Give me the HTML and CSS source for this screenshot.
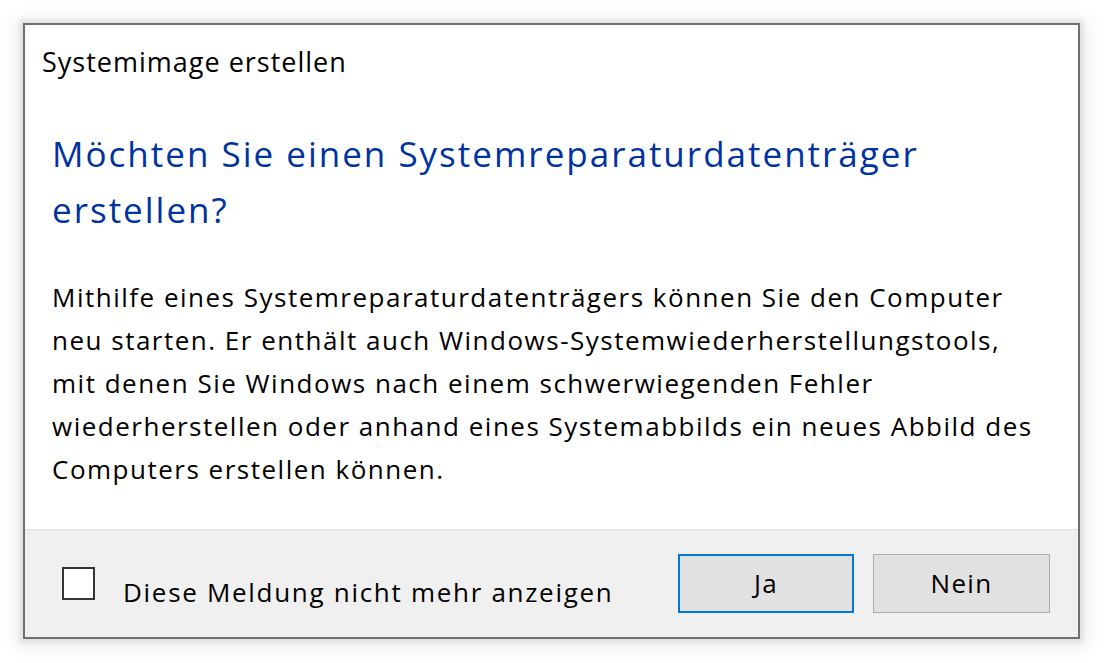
FILE: index.html
```html
<!DOCTYPE html>
<html lang="de">
  <head>
    <meta charset="UTF-8" />
    <title>Systemimage erstellen</title>
    <link rel="stylesheet" href="styles.css">
  </head>
  <body>
    <div class="dialog">
      <div class="dialog-body">
        <div class="caption">Systemimage erstellen</div>
        <h1 class="instruction">Möchten Sie einen Systemreparaturdatenträger erstellen?</h1>
        <p class="content">
          Mithilfe eines Systemreparaturdatenträgers können Sie den Computer
          neu starten. Er enthält auch Windows-Systemwiederherstellungstools,
          mit denen Sie Windows nach einem schwerwiegenden Fehler
          wiederherstellen oder anhand eines Systemabbilds ein neues Abbild des
          Computers erstellen können.
        </p>
      </div>
      <div class="dialog-footer">
        <label class="verify">
          <span class="check-box"></span>
          <span class="verify-text">Diese Meldung nicht mehr anzeigen</span>
        </label>
        <div class="buttons">
          <button class="btn btn-default">Ja</button>
          <button class="btn">Nein</button>
        </div>
      </div>
    </div>
  </body>
</html>
```

FILE: styles.css
```css
* {
  margin: 0;
  padding: 0;
  box-sizing: border-box;
}

body {
  background: #fff;
  font-family: "Open Sans", "Noto Sans", sans-serif;
  font-size: 26px;
  letter-spacing: 1.5px;
  color: #000;
  padding: 23px 0 24px 23px;
}

/* window frame */
.dialog {
  width: 1057px;
  height: 616px;
  border: 2px solid #6f6f6f;
  background: #fff;
  display: flex;
  flex-direction: column;
  box-shadow: 0 0 4px 4px rgba(0, 0, 0, 0.07), 0 3px 16px 8px rgba(0, 0, 0, 0.06);
}

.dialog-body {
  flex: 1;
  padding: 20px 20px 0 17px;
}

.caption {
  font-size: 27px;
  letter-spacing: 1px;
  line-height: 34px;
}

.instruction {
  font-size: 35px;
  font-weight: 400;
  letter-spacing: 2px;
  line-height: 56px;
  color: #0033a0;
  margin: 47px 0 0 10px;
}

.content {
  line-height: 43px;
  margin: 38px 0 0 10px;
  max-width: 1000px;
}

/* footer with checkbox and command buttons */
.dialog-footer {
  height: 108px;
  background: #f0f0f0;
  border-top: 1px solid #dfdfdf;
  display: flex;
  align-items: center;
  justify-content: space-between;
  padding: 0 28px 0 37px;
}

.verify {
  display: flex;
  align-items: center;
  gap: 28px;
}

.check-box {
  width: 33px;
  height: 33px;
  border: 2px solid #333;
  background: #fff;
}

.verify-text {
  padding-top: 17px;
  letter-spacing: 1.7px;
}

.buttons {
  display: flex;
  gap: 19px;
  margin-top: -1px;
}

.btn {
  width: 177px;
  height: 59px;
  font-family: inherit;
  font-size: 26px;
  letter-spacing: 1.3px;
  color: #000;
  background: #e1e1e1;
  border: 1px solid #adadad;
}

.btn-default {
  width: 176px;
  border: 2px solid #0078d7;
}
```
